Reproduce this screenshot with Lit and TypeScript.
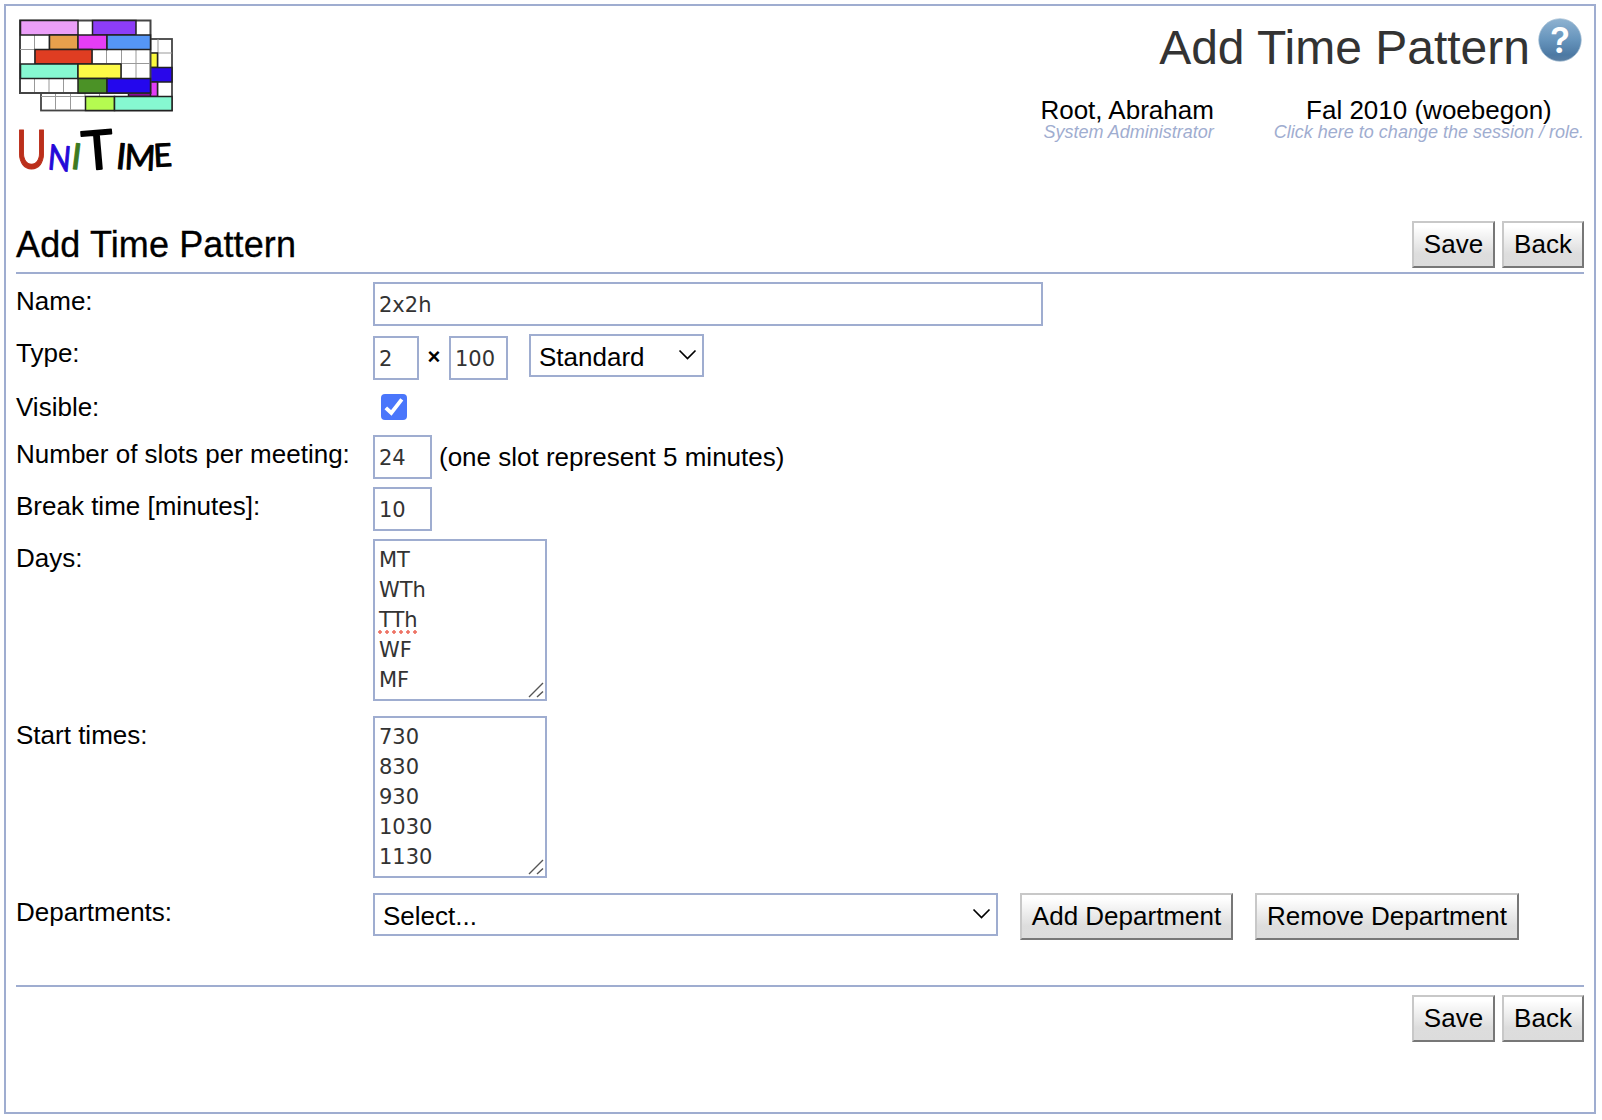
import { LitElement, html, svg, css } from "lit";
import { customElement, property } from "lit/decorators.js";

const shared = css`
  *, *::before, *::after { box-sizing: border-box; }
`;

@customElement("unitime-logo")
class UnitimeLogo extends LitElement {
  static styles = css`
    :host { display: block; width: 160px; height: 160px; }
    svg { display: block; overflow: visible; }
    text { font-family: Lato, "Open Sans", sans-serif; stroke-linejoin: round; stroke-linecap: round; }
  `;

  // Blocks as [x, y, width, height, colour]
  private back = [
    [150, 53, 7.5, 14.5, "#fbf93c"],
    [150, 67.5, 22, 14.5, "#2a07ea"],
    [150, 82, 7.5, 14.5, "#e23cf5"],
    [128.5, 93, 22, 3.5, "#8b0a9c"],
    [85.5, 96.5, 29, 14, "#b5fb50"],
    [114.5, 96.5, 57.5, 14, "#86f8d1"],
  ];

  private front = [
    [20.5, 20.5, 57.5, 14.5, "#eb9ff8"],
    [92.5, 20.5, 43.5, 14.5, "#8d3df7"],
    [49.5, 35, 28.5, 14.5, "#e7a04c"],
    [78, 35, 29, 14.5, "#e53df6"],
    [107, 35, 43.5, 14.5, "#5596f6"],
    [35, 49.5, 57, 14.5, "#df3d22"],
    [20.5, 64, 57.5, 14.5, "#86f8d1"],
    [78, 64, 43, 14.5, "#fdfa47"],
    [78, 78.5, 29, 14.5, "#4b9226"],
    [107, 78.5, 43.5, 14.5, "#2407ed"],
  ];

  private block = (b: any[]) =>
    svg`<rect x=${b[0]} y=${b[1]} width=${b[2]} height=${b[3]} fill=${b[4]} stroke="#222" stroke-width="1.5"/>`;

  render() {
    return html`
      <svg width="160" height="160" viewBox="16 16 160 160" role="img" aria-label="UniTime">
        <rect x="41" y="39" width="131" height="71.5" fill="#fff" stroke="#444" stroke-width="1.8" />
        <path d="M158 39V96M150 53H172M41 96.5H128M55.500 93V110M70.500 93V110M85 93V97M99.500 93V97" stroke="#999" stroke-width="1" fill="none" />
        ${this.back.map(this.block)}
        <rect x="20" y="20.500" width="130.500" height="72.500" fill="#fff" stroke="#444" stroke-width="2" />
        <path d="M34.500 35V64M49 35V49M34.500 78V92M49 78V92M63.500 78V92M92.500 49V64M106.500 49V64M121.500 49V78M136 49V78M20 49.500H35M92 63.500H150" stroke="#999" stroke-width="1" fill="none" />
        ${this.front.map(this.block)}
        <text><tspan x="16" y="168.500" font-size="55" textLength="31" lengthAdjust="spacingAndGlyphs" fill="#bb2f1b" stroke="#bb2f1b" stroke-width="1.2">U</tspan><tspan x="47" y="169" font-size="35" rotate="6" textLength="23" lengthAdjust="spacingAndGlyphs" fill="#2409d8" stroke="#2409d8" stroke-width="1">N</tspan><tspan x="70" y="168.500" font-size="36" rotate="7" fill="#3d7a20" stroke="#3d7a20" stroke-width="1">I</tspan><tspan x="83.500" y="170.500" font-size="54" rotate="-5" fill="#000" stroke="#000" stroke-width="1.600">T</tspan><tspan x="115" y="168.500" font-size="36" rotate="6" fill="#000" stroke="#000" stroke-width="1">I</tspan><tspan x="124" y="169" font-size="35" rotate="3" textLength="31" lengthAdjust="spacingAndGlyphs" fill="#000" stroke="#000" stroke-width="1">M</tspan><tspan x="154" y="167" font-size="32" rotate="-3" fill="#000" stroke="#000" stroke-width="1">E</tspan></text>
      </svg>
    `;
  }
}

@customElement("help-icon")
class HelpIcon extends LitElement {
  static styles = css`
    :host { display: block; width: 44px; height: 44px; }
    svg { display: block; }
    text { font: 600 36px Inter, "Open Sans", sans-serif; }
  `;
  render() {
    return html`
      <svg width="44" height="44" viewBox="0 0 44 44" role="img" aria-label="Help">
        <defs>
          <linearGradient id="g" x1="0" y1="0" x2="0" y2="1">
            <stop offset="0" stop-color="#8fb3d1" />
            <stop offset=".5" stop-color="#6694bc" />
            <stop offset=".85" stop-color="#4d79a3" />
            <stop offset="1" stop-color="#5b7fa3" />
          </linearGradient>
        </defs>
        <circle cx="22" cy="22" r="21.300" fill="url(#g)" stroke="#a9c1d6" stroke-width=".7" />
        <text x="22" y="34.500" text-anchor="middle" fill="#fff">?</text>
      </svg>
    `;
  }
}

@customElement("push-button")
class PushButton extends LitElement {
  static styles = [shared, css`
    :host { display: block; }
    button {
      display: block; width: 100%; height: 47px; margin: 0; padding: 0 0 2px;
      font: 26px/30px "Liberation Sans", Arial, sans-serif; color: #000; white-space: nowrap;
      border: 2px solid; border-color: #c8c8c8 #777 #777 #c8c8c8; border-radius: 0;
      background: linear-gradient(#fff 8%, #ddd 72%, #dcdcdc);
    }
  `];
  render() { return html`<button type="button"><slot></slot></button>`; }
}

@customElement("drop-down")
class DropDown extends LitElement {
  static styles = [shared, css`
    :host { display: block; position: relative; height: 43px; }
    select {
      appearance: none; display: block; width: 100%; height: 43px; margin: 0; padding: 2px 0 0 8px;
      font: 26px/30px "Liberation Sans", Arial, sans-serif; color: #000;
      border: 2px solid #9fadd0; border-radius: 0; background: #fff;
    }
    svg { position: absolute; right: 7px; top: 14px; pointer-events: none; }
  `];
  @property() value = "";
  render() {
    return html`
      <select><option selected>${this.value}</option></select>
      <svg width="19" height="13" viewBox="0 0 19 13"><path d="M1.500 2.500L9.500 10.500L17.500 2.500" fill="none" stroke="#000" stroke-width="1.700" /></svg>
    `;
  }
}

@customElement("multi-line")
class MultiLine extends LitElement {
  static styles = [shared, css`
    :host { display: block; position: relative; width: 174px; height: 162px; }
    .area {
      height: 162px; padding: 4px 4px; border: 2px solid #9fadd0; background: #fff; outline: none;
      font: 21px/30px "DejaVu Sans", Verdana, sans-serif; color: #333;
    }
    .misspelt { position: relative; display: inline-block; }
    .misspelt::after {
      content: ""; position: absolute; left: -1px; right: -1px; bottom: 1px; height: 4px;
      background: radial-gradient(circle at 2px 2px, #ee7466 1.500px, transparent 2px) 0 0 / 7px 4px repeat-x;
    }
    svg { position: absolute; right: 3px; bottom: 3px; }
  `];
  @property({ attribute: false }) lines: string[] = [];
  @property() misspelt = "";
  render() {
    return html`
      <div class="area" role="textbox" aria-multiline="true">${this.lines.map(
        (l) => html`<div>${l === this.misspelt ? html`<span class="misspelt">${l}</span>` : l}</div>`)}</div>
      <svg width="16" height="16" viewBox="0 0 16 16"><path d="M1 15L15 1M9 15L15 9.500" stroke="#555" stroke-width="1.400" fill="none" /></svg>
    `;
  }
}

@customElement("app-root")
class AppRoot extends LitElement {
  static styles = [shared, css`
    :host {
      display: block; height: 1120px; padding: 4px 6px 6px 4px; background: #fff;
      font: 26px/30px "Liberation Sans", Arial, sans-serif; color: #000;
    }
    .frame { display: flex; flex-direction: column; height: 1110px; border: 2px solid #9fadd0; padding: 0 10px; }
    header { display: flex; justify-content: space-between; height: 209px; flex: none; }
    unitime-logo { margin: 10px 0 0; }
    .info { display: flex; flex-direction: column; align-items: flex-end; padding-top: 12px; }
    .page { display: flex; gap: 8px; padding-right: 2px; }
    .page-title { font-size: 48px; line-height: 56px; margin-top: 2px; color: #333; }
    .who { display: flex; gap: 60px; margin-top: 19px; line-height: 30px; }
    .user { text-align: right; }
    .session { text-align: center; }
    .note { font-size: 18px; line-height: 20px; font-style: italic; color: #9fadd0; margin-top: -3px; }
    .bar { display: flex; justify-content: space-between; flex: none; height: 59px; padding-top: 6px; border-bottom: 2px solid #9fadd0; }
    h1 { font-size: 36px; line-height: 42px; font-weight: 400; margin: 3px 0 0; letter-spacing: .12px; -webkit-text-stroke: .3px #000; }
    .actions { display: flex; gap: 7px; margin-left: auto; }
    .save { width: 83px; }
    .back { width: 82px; }
    .form { display: flex; flex-direction: column; padding-top: 4px; }
    .row { display: grid; grid-template-columns: 357px 1fr; height: 52px; align-items: start; }
    .label { padding-top: 8px; }
    .type { height: 54px; }
    .visible { height: 47px; }
    .tall { height: 177px; }
    .field { display: flex; align-items: flex-start; padding-top: 4px; }
    .text {
      display: block; height: 44px; width: 59px; margin: 0; padding: 1px 4px 0; border: 2px solid #9fadd0; border-radius: 0;
      background: #fff; font: 21px/30px "DejaVu Sans", Verdana, sans-serif; color: #333; outline: none;
    }
    .name { width: 670px; }
    .one { width: 46px; }
    .low { margin-top: 2px; }
    .times { width: 30px; text-align: center; padding-top: 8px; font: 700 22px/30px "Liberation Sans", Arial, sans-serif; }
    .kind { width: 175px; margin-left: 21px; }
    .check {
      appearance: none; width: 26px; height: 26px; margin: 6px 0 0 8px; border-radius: 4px; background: #4a76fb;
      display: grid; place-items: center;
    }
    .hint { padding: 7px 0 0 7px; }
    .departments { width: 625px; margin-right: 22px; }
    .add { width: 213px; margin-right: 22px; }
    .remove { width: 264px; }
    .footer { display: flex; flex: none; margin-top: 44px; border-top: 2px solid #9fadd0; padding-top: 8px; }
  `];

  private days = ["MT", "WTh", "TTh", "WF", "MF"];
  private times = ["730", "830", "930", "1030", "1130"];

  private actions() {
    return html`<div class="actions">
      <push-button class="save">Save</push-button>
      <push-button class="back">Back</push-button>
    </div>`;
  }

  render() {
    return html`
      <div class="frame">
        <header>
          <unitime-logo></unitime-logo>
          <div class="info">
            <div class="page"><div class="page-title">Add Time Pattern</div><help-icon></help-icon></div>
            <div class="who">
              <div class="user"><div>Root, Abraham</div><div class="note">System Administrator</div></div>
              <div class="session"><div>Fal 2010 (woebegon)</div><div class="note">Click here to change the session / role.</div></div>
            </div>
          </div>
        </header>
        <div class="bar"><h1>Add Time Pattern</h1>${this.actions()}</div>
        <div class="form">
          <div class="row"><div class="label">Name:</div>
            <div class="field"><input class="text name" value="2x2h" /></div></div>
          <div class="row type"><div class="label">Type:</div>
            <div class="field">
              <input class="text one low" value="2" /><span class="times">×</span><input class="text low" value="100" />
              <drop-down class="kind" value="Standard"></drop-down>
            </div></div>
          <div class="row visible"><div class="label">Visible:</div>
            <div class="field"><div class="check" role="checkbox" aria-checked="true">
              <svg width="26" height="26" viewBox="0 0 26 26"><path d="M4.800 13.800L10.300 19L20.800 5.300" fill="none" stroke="#fff" stroke-width="3.800" /></svg>
            </div></div></div>
          <div class="row"><div class="label">Number of slots per meeting:</div>
            <div class="field"><input class="text" value="24" /><span class="hint">(one slot represent 5 minutes)</span></div></div>
          <div class="row"><div class="label">Break time [minutes]:</div>
            <div class="field"><input class="text" value="10" /></div></div>
          <div class="row tall"><div class="label">Days:</div>
            <div class="field"><multi-line .lines=${this.days} misspelt="TTh"></multi-line></div></div>
          <div class="row tall"><div class="label">Start times:</div>
            <div class="field"><multi-line .lines=${this.times}></multi-line></div></div>
          <div class="row"><div class="label">Departments:</div>
            <div class="field">
              <drop-down class="departments" value="Select..."></drop-down>
              <push-button class="add">Add Department</push-button>
              <push-button class="remove">Remove Department</push-button>
            </div></div>
        </div>
        <div class="footer">${this.actions()}</div>
      </div>
    `;
  }
}
